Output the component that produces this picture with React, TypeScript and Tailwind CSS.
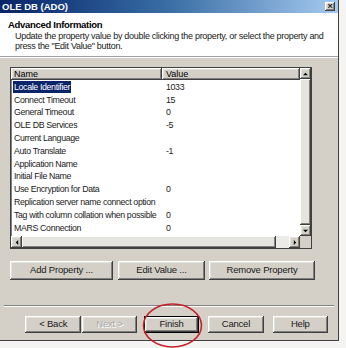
const FONT = "font-['Tahoma','Liberation_Sans','DejaVu_Sans',sans-serif]";
const RAISED =
  "shadow-[inset_-1px_-1px_#404040,inset_1px_1px_#ffffff,inset_-2px_-2px_#808080,inset_2px_2px_#e4e2dc]";
const BTN = `bg-[#d4d0c8] text-[#1a1a1a] text-[9.5px] tracking-[-0.2px] flex items-center justify-center ${RAISED}`;

const rows: [string, string][] = [
  ["Locale Identifier", "1033"],
  ["Connect Timeout", "15"],
  ["General Timeout", "0"],
  ["OLE DB Services", "-5"],
  ["Current Language", ""],
  ["Auto Translate", "-1"],
  ["Application Name", ""],
  ["Initial File Name", ""],
  ["Use Encryption for Data", "0"],
  ["Replication server name connect option", ""],
  ["Tag with column collation when possible", "0"],
  ["MARS Connection", "0"],
];

function Arrow({ dir }: { dir: "up" | "down" | "left" | "right" }) {
  const pts = {
    up: "1,4 4,1 7,4",
    down: "1,1 4,4 7,1",
    left: "4,1 1,4 4,7",
    right: "1,1 4,4 1,7",
  }[dir];
  const vb = dir === "up" || dir === "down" ? "0 0 8 5" : "0 0 5 8";
  const size = dir === "up" || dir === "down" ? "w-[7px] h-[4px]" : "w-[4px] h-[7px]";
  return (
    <svg viewBox={vb} className={size}>
      <polygon points={pts} fill="#000" />
    </svg>
  );
}

export default function App() {
  return (
    <div className={`w-[346px] h-[348px] bg-[#f4f4f2] relative overflow-hidden ${FONT}`}>
      <div className="w-[339px] h-[341px] bg-[#d4d0c8] border-r border-b border-[#404040] flex flex-col">
        {/* title bar */}
        <div className="h-[13px] bg-gradient-to-r from-[#0a246a] via-[#3a6ea5] to-[#a6caf0] flex items-center justify-between pl-[2px] pr-[3px]">
          <span className="text-white font-bold text-[9.5px] leading-none">OLE DB (ADO)</span>
          <div className={`w-[10px] h-[9px] ${BTN} text-[9px] font-bold leading-none`}>×</div>
        </div>

        {/* header */}
        <div className="h-[44px] bg-white border-b border-[#a0a0a0] pl-[8px] pt-[6px]">
          <div className="font-bold text-[9.5px] tracking-[-0.3px] leading-[11px] text-black">Advanced Information</div>
          <div className="pl-[7px] text-[9px] tracking-[-0.3px] leading-[10px] text-[#202020] mt-[1px] whitespace-nowrap">
            Update the property value by double clicking the property, or select the property and
            <br />
            press the "Edit Value" button.
          </div>
        </div>

        {/* body */}
        <div className="flex-1 border-t border-white px-[10px] pt-[9px]">
          {/* list box */}
          <div className="w-[302px] h-[182px] border border-[#404040] shadow-[inset_1px_1px_#808080] bg-white flex flex-col">
            <div className="flex flex-1 min-h-0">
              <div className="flex-1 flex flex-col">
                <div className="h-[12px] flex text-[9px] leading-[12px] text-black">
                  <div className={`w-[151px] bg-[#d4d0c8] pl-[3px] ${RAISED}`}>Name</div>
                  <div className={`flex-1 bg-[#d4d0c8] pl-[4px] ${RAISED}`}>Value</div>
                </div>
                <div className="h-[1px]" />
                {rows.map(([n, v], i) => (
                  <div key={n} className="h-[12.8px] flex items-center text-[8.8px] tracking-[-0.35px] text-[#1a1a1a]">
                    <div className="w-[151px] pl-[2px] whitespace-nowrap">
                      <span className={i === 0 ? "bg-[#0a246a] text-white px-[1px] py-[1px]" : "px-[1px]"}>{n}</span>
                    </div>
                    <div className="pl-[4px]">{v}</div>
                  </div>
                ))}
              </div>
              {/* vertical scrollbar */}
              <div className="w-[11px] flex flex-col bg-[#ecebe6]">
                <div className={`h-[11px] ${BTN}`}><Arrow dir="up" /></div>
                <div className={`flex-1 bg-[#e6e4de] ${RAISED}`} />
                <div className={`h-[11px] ${BTN}`}><Arrow dir="down" /></div>
              </div>
            </div>
            {/* horizontal scrollbar */}
            <div className="h-[12px] flex bg-[#ecebe6]">
              <div className={`w-[11px] ${BTN}`}><Arrow dir="left" /></div>
              <div className={`w-[254px] bg-[#e6e4de] ${RAISED}`} />
              <div className="flex-1" />
              <div className={`w-[11px] ${BTN}`}><Arrow dir="right" /></div>
              <div className="w-[11px] bg-[#d4d0c8]" />
            </div>
          </div>

          {/* property buttons */}
          <div className="flex gap-[4px] mt-[12px] h-[19px]">
            <div className={`w-[103px] ${BTN}`}>Add Property ...</div>
            <div className={`w-[87px] ml-[1px] ${BTN}`}>Edit Value ...</div>
            <div className={`w-[106px] ${BTN}`}>Remove Property</div>
          </div>

          {/* separator */}
          <div className="mt-[25px] h-[2px] border-t border-[#808080] border-b border-b-white -mx-[6px]" />

          {/* wizard buttons */}
          <div className="flex mt-[9px] h-[17px] pl-[15px]">
            <div className={`w-[57px] ${BTN}`}>&lt; Back</div>
            <div className={`w-[55px] ml-[1px] ${BTN} text-[#a8a8a8] [text-shadow:1px_1px_#fff]`}>Next &gt;</div>
            <div className="w-[56px] ml-[7px] border border-black flex">
              <div className={`flex-1 ${BTN}`}>Finish</div>
            </div>
            <div className={`w-[56px] ml-[9px] ${BTN}`}>Cancel</div>
            <div className={`w-[56px] ml-[9px] ${BTN}`}>Help</div>
          </div>
        </div>
      </div>

      {/* red circle annotation */}
      <svg className="absolute left-0 top-0 w-[346px] h-[348px] pointer-events-none" viewBox="0 0 346 348">
        <ellipse cx="172.5" cy="325.5" rx="29" ry="21.5" fill="none" stroke="#c8202a" strokeWidth="1.6" />
      </svg>
    </div>
  );
}
